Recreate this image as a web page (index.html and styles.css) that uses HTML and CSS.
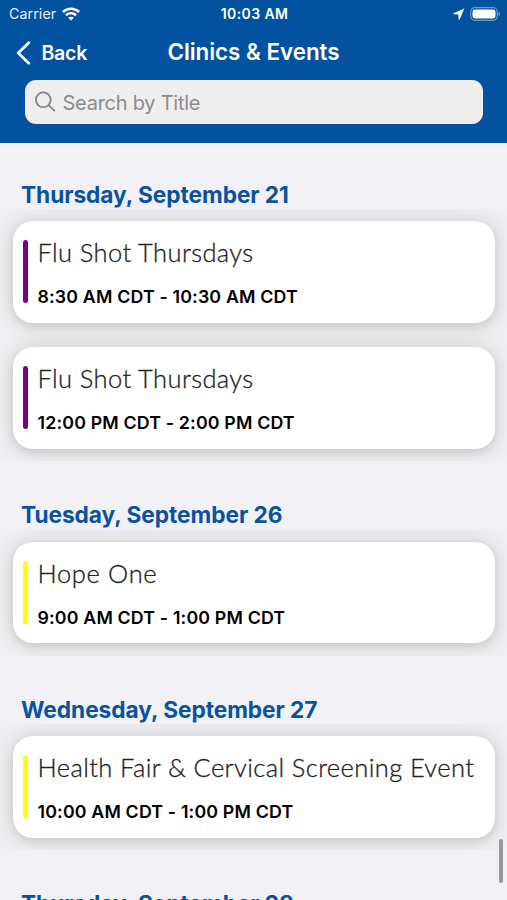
FILE: index.html
```html
<!DOCTYPE html>
<html lang="en">
<head>
<meta charset="utf-8">
<title>Clinics &amp; Events</title>
<link rel="stylesheet" href="styles.css">
</head>
<body>
<header class="top">
  <div class="status">
    <div class="carrier"><span class="carrier-name">Carrier</span>
      <svg width="18" height="14" viewBox="0 0 18 14" fill="none" stroke="#fff" stroke-width="2.6"><path d="M.9 5C5.4.6 12.6.6 17.1 5M4 8.3c2.9-2.8 7.1-2.8 10 0"/><path d="M6.1 10.7c1.6-1.4 4.2-1.4 5.8 0L9 13.6z" fill="#fff" stroke="none"/></svg>
    </div>
    <span class="clock">10:03 AM</span>
    <div class="indicators">
      <svg width="12" height="12" viewBox="0 0 12 12"><path d="M11.4.4.5 5.3q-.7.7.3 1l4.6.2.2 4.8q.4.8 1 .1z" fill="#fff"/></svg>
      <svg width="31" height="14" viewBox="0 0 31 14"><rect x=".7" y=".7" width="26.6" height="12.6" rx="4" fill="none" stroke="#fff" stroke-opacity=".42" stroke-width="1.2"/><rect x="2.5" y="2.5" width="23" height="9" rx="2.4" fill="#fff"/><path d="M28.6 4.8c2 .8 2 3.6 0 4.4z" fill="#fff" fill-opacity=".45"/></svg>
    </div>
  </div>
  <nav class="nav">
    <a class="back"><svg width="15" height="24" viewBox="0 0 15 24" fill="none" stroke="#fff" stroke-width="2.7" stroke-linecap="round" stroke-linejoin="round"><path d="M12.8 1.8 2.2 12l10.6 10.2"/></svg><span class="back-label">Back</span></a>
    <h1 class="title">Clinics &amp; Events</h1>
    <span></span>
  </nav>
  <div class="search">
    <svg width="22" height="22" viewBox="0 0 22 22" fill="none" stroke="#858587" stroke-width="1.8" stroke-linecap="round"><circle cx="8.3" cy="8.8" r="7.4"/><path d="m13.8 14.3 5.6 5.4"/></svg>
    <span class="placeholder">Search by Title</span>
  </div>
</header>
<main class="events">
  <section>
    <h2 class="date d1"><span>Thursday, September 21</span></h2>
    <div class="group">
      <article class="card purple"><i class="bar"></i><div class="info"><h3 class="name">Flu Shot Thursdays</h3><p class="time">8:30 AM CDT - 10:30 AM CDT</p></div></article>
      <article class="card purple"><i class="bar"></i><div class="info"><h3 class="name">Flu Shot Thursdays</h3><p class="time">12:00 PM CDT - 2:00 PM CDT</p></div></article>
    </div>
  </section>
  <section>
    <h2 class="date"><span>Tuesday, September 26</span></h2>
    <div class="group">
      <article class="card yellow"><i class="bar"></i><div class="info"><h3 class="name wide">Hope One</h3><p class="time">9:00 AM CDT - 1:00 PM CDT</p></div></article>
    </div>
  </section>
  <section>
    <h2 class="date"><span>Wednesday, September 27</span></h2>
    <div class="group">
      <article class="card yellow"><i class="bar"></i><div class="info"><h3 class="name">Health Fair &amp; Cervical Screening Event</h3><p class="time">10:00 AM CDT - 1:00 PM CDT</p></div></article>
    </div>
  </section>
  <section>
    <h2 class="date"><span>Thursday, September 28</span></h2>
  </section>
</main>
<div class="scroll-thumb"></div>
</body>
</html>
```
FILE: styles.css
```css
* { box-sizing: border-box; margin: 0; padding: 0; }
body { height: 900px; overflow: hidden; background: #f0f0f5; font-family: Inter, "Liberation Sans", sans-serif; display: flex; flex-direction: column; }
svg { display: block; flex: none; }
.top { height: 142.5px; flex: none; background: #03529f; color: #fff; }
.status { height: 27px; display: grid; grid-template-columns: 1fr auto 1fr; align-items: center; padding: 0 7px 0 9px; font-size: 14px; line-height: 18px; }
.carrier { display: flex; align-items: center; gap: 6px; color: #e5f1ff; }
.carrier-name { font-size: 14.2px; letter-spacing: .1px; }
.clock { font-weight: 600; font-size: 14px; letter-spacing: .4px; }
.indicators { display: flex; justify-content: flex-end; align-items: center; gap: 5px; }
.indicators svg:last-child { margin-right: -1px; }
.nav { height: 50px; display: grid; grid-template-columns: 1fr auto 1fr; align-items: center; padding: 0 16px; }
.back { display: flex; align-items: center; gap: 10.5px; padding-top: 1px; }
.back-label { font-size: 19.5px; font-weight: 600; letter-spacing: -.25px; }
.title { font-size: 22.4px; font-weight: 600; letter-spacing: -.02px; position: relative; top: -1px; }
.search { height: 44px; margin: 3px 24px 0 25px; padding: 0 10px; border-radius: 11px; background: #eee; display: flex; align-items: center; gap: 5.5px; color: #8b8b8d; }
.placeholder { font-size: 20px; letter-spacing: -.25px; padding-top: 1px; }
.events { flex: 1; min-height: 0; overflow: hidden; }
.date { height: 68.5px; padding: 0 21px 1.5px; display: flex; align-items: flex-end; color: #0b529d; font-size: 22.7px; font-weight: 700; line-height: 27px; letter-spacing: -.05px; }
.d1 { height: 66.5px; padding-bottom: 1px; }
.group { overflow: hidden; background: #f0f0f2; }
.card { height: 101.5px; margin: 12px 12.5px 24.5px; padding: 0 10px; background: #fff; border-radius: 20px; box-shadow: 0 3px 8px rgba(0,0,0,.1), 0 1px 22px 3px rgba(0,0,0,.11); display: flex; align-items: center; position: relative; }
.group .card:last-child { margin-bottom: 12.5px; }
.bar { width: 5px; height: 63px; border-radius: 2.5px; }
.purple .bar { background: #780080; }
.yellow .bar { background: #ff0; }
.info { height: 101.5px; padding: 15px 0 0 10px; white-space: nowrap; }
.name { font-family: Lato, sans-serif; font-size: 25.5px; font-weight: 300; line-height: 32px; color: #222; letter-spacing: .4px; -webkit-text-stroke: .3px #222; }
.wide { letter-spacing: .65px; }
.time { margin-top: 18px; font-size: 17.8px; font-weight: 600; line-height: 22px; color: #000; letter-spacing: .16px; }
.scroll-thumb { position: absolute; left: 499px; top: 839px; width: 4px; height: 44px; border-radius: 2px; background: #98989b; }
```
